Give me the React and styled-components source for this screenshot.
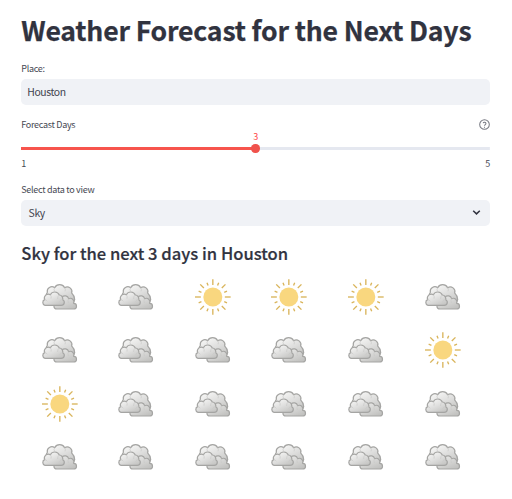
import React from "react";
import styled, { createGlobalStyle } from "styled-components";

const GlobalStyle = createGlobalStyle`
  * { box-sizing: border-box; }
  body {
    margin: 0;
    background: #fff;
    color: #31333f;
    font-family: "Noto Sans CJK SC", "Noto Sans", sans-serif;
  }
`;

const Page = styled.main`
  width: 512px;
  height: 499px;
  padding: 11.4px 22px 0 21.3px;
  overflow: hidden;
`;

const Title = styled.h1`
  margin: 0 0 12.6px;
  height: 38px;
  font-size: 26.6px;
  line-height: 38px;
  font-weight: 700;
  letter-spacing: -0.19px;
  -webkit-text-stroke: 0.25px currentColor;
  white-space: nowrap;
`;

const Label = styled.div`
  display: flex;
  justify-content: space-between;
  align-items: center;
  height: 13px;
  font-size: 9px;
  line-height: 13px;
  letter-spacing: -0.3px;
  color: #464853;
`;

const Field = styled.div`
  display: flex;
  justify-content: space-between;
  align-items: center;
  height: 26.3px;
  margin-top: 4px;
  padding: 0 8.5px 0 ${(p) => p.$inset}px;
  border-radius: 5px;
  background: #f0f2f6;
  color: #41434e;
  font-size: 10.4px;
  line-height: 26px;
  letter-spacing: -0.4px;
`;

const SliderGroup = styled.section`
  height: 64.8px;
  margin-top: 12.5px;
`;

const SliderValue = styled.div`
  height: 13px;
  margin-top: -0.8px;
  font-size: 9px;
  line-height: 13px;
  text-align: center;
  color: #ff4b4b;
`;

const Track = styled.div`
  display: flex;
  align-items: center;
  justify-content: center;
  height: 9px;
  margin-top: 1.2px;
  background: linear-gradient(to right, #f7544d 50%, #e5e8f0 50%) center / 100% 3px no-repeat;
`;

const Thumb = styled.span`
  width: 8.4px;
  height: 8.4px;
  border-radius: 50%;
  background: #f0524c;
`;

const Limits = styled(Label)`
  margin-top: 3.4px;
`;

const Subtitle = styled.h3`
  margin: 13.9px 0 3.7px;
  height: 27px;
  font-size: 16.6px;
  line-height: 27px;
  font-weight: 500;
  -webkit-text-stroke: 0.2px currentColor;
  white-space: nowrap;
`;

const Forecast = styled.section`
  display: grid;
  grid-template-columns: repeat(6, 76.6px);
  grid-auto-rows: 53.3px;
  place-items: center;
`;

const Weather = styled.svg`
  width: 38px;
  height: 38px;
  display: block;
`;

const Glyph = styled.svg`
  display: block;
  width: ${(p) => p.$size}px;
  height: ${(p) => p.$size}px;
  fill: none;
  stroke: ${(p) => p.$color};
`;

const rays = Array.from({ length: 16 }, (_, i) => i);

function Sun() {
  return (
    <Weather viewBox="-56.5 -57 114 114" role="img" aria-label="Sunny">
      <circle r="28.5" fill="#f9d77f" />
      {rays.map((i) => {
        const long = i % 2 === 0;
        return (
          <line
            key={i}
            y1={i % 4 === 0 ? -36 : long ? -38 : -37}
            y2={long ? -53.5 : -46}
            transform={`rotate(${i * 22.5})`}
            stroke="#d9b45a"
            strokeWidth="4"
          />
        );
      })}
    </Weather>
  );
}

function Clouds() {
  return (
    <Weather viewBox="-55 -57 114 114" role="img" aria-label="Cloudy">
      <g stroke="#a5a5a3" strokeWidth="3.6" strokeLinejoin="round">
        <path
          fill="url(#cloudLight)"
          d="M-35 5A14 14 0 0 1-36-14A14 14 0 0 1-14-28A17 17 0 0 1 16-28A14 14 0 0 1 37-12Q45-5 46 8L40 22H-30Z"
        />
        <path
          fill="url(#cloudShade)"
          d="M-7 36C-19 36-19 21-8 20A12 12 0 0 1 9 7L8 0A12 12 0 0 1 28 5A11 11 0 0 1 43 19A8.5 8.5 0 0 1 43 36Z"
        />
        <path
          fill="url(#cloudLight)"
          d="M-43 25A9 9 0 0 1-44 8A12 12 0 0 1-27-7A15 15 0 0 1 0-6A11 11 0 0 1 10 8A9 9 0 0 1 6 25Z"
        />
      </g>
      <g fill="none" stroke="#c9c9c7" strokeWidth="3" opacity="0.7">
        <path d="M-14-28Q-18-22-14-17M16-28Q20-23 17-17M-27-7Q-23-2-25 5M0-6Q-6-2-5 6M28 5Q24 10 27 18M-44 8Q-39 8-36 13M10 8Q3 8 1 14" />
      </g>
    </Weather>
  );
}

const conditions = ["ccsssc", "cccccs", "sccccc", "cccccc"].join("").split("");

export default function App() {
  return (
    <>
      <GlobalStyle />
      <Page>
        <svg width="0" height="0" style={{ display: "block" }} aria-hidden="true">
          <defs>
            <linearGradient id="cloudLight" x1="0.1" y1="0" x2="0.8" y2="1">
              <stop offset="0.15" stopColor="#f3f3f2" />
              <stop offset="0.55" stopColor="#dededd" />
              <stop offset="1" stopColor="#c4c4c2" />
            </linearGradient>
            <linearGradient id="cloudShade" x1="0" y1="0" x2="0.7" y2="1">
              <stop offset="0" stopColor="#efefee" />
              <stop offset="1" stopColor="#c2c2c0" />
            </linearGradient>
          </defs>
        </svg>
        <Title>Weather Forecast for the Next Days</Title>
        <Label>Place:</Label>
        <Field $inset={6}>Houston</Field>
        <SliderGroup>
          <Label>
            Forecast Days
            <Glyph $size={11} $color="#777982" viewBox="0 0 24 24" strokeWidth="2.2">
              <circle cx="12" cy="12" r="10.5" />
              <path d="M9 9a3.2 3.2 0 0 1 6.2 1c0 2.2-3.2 2.5-3.2 4.8M12 17v2" />
            </Glyph>
          </Label>
          <SliderValue>3</SliderValue>
          <Track>
            <Thumb />
          </Track>
          <Limits>
            <span>1</span>
            <span>5</span>
          </Limits>
        </SliderGroup>
        <Label>Select data to view</Label>
        <Field $inset={7.3}>
          Sky
          <Glyph $size={11} $color="#31333f" viewBox="0 0 11 11" strokeWidth="1.5">
            <path d="M2.2 3.8 5.5 6.9 8.8 3.8" />
          </Glyph>
        </Field>
        <Subtitle>Sky for the next 3 days in Houston</Subtitle>
        <Forecast>
          {conditions.map((condition, i) => (condition === "s" ? <Sun key={i} /> : <Clouds key={i} />))}
        </Forecast>
      </Page>
    </>
  );
}
